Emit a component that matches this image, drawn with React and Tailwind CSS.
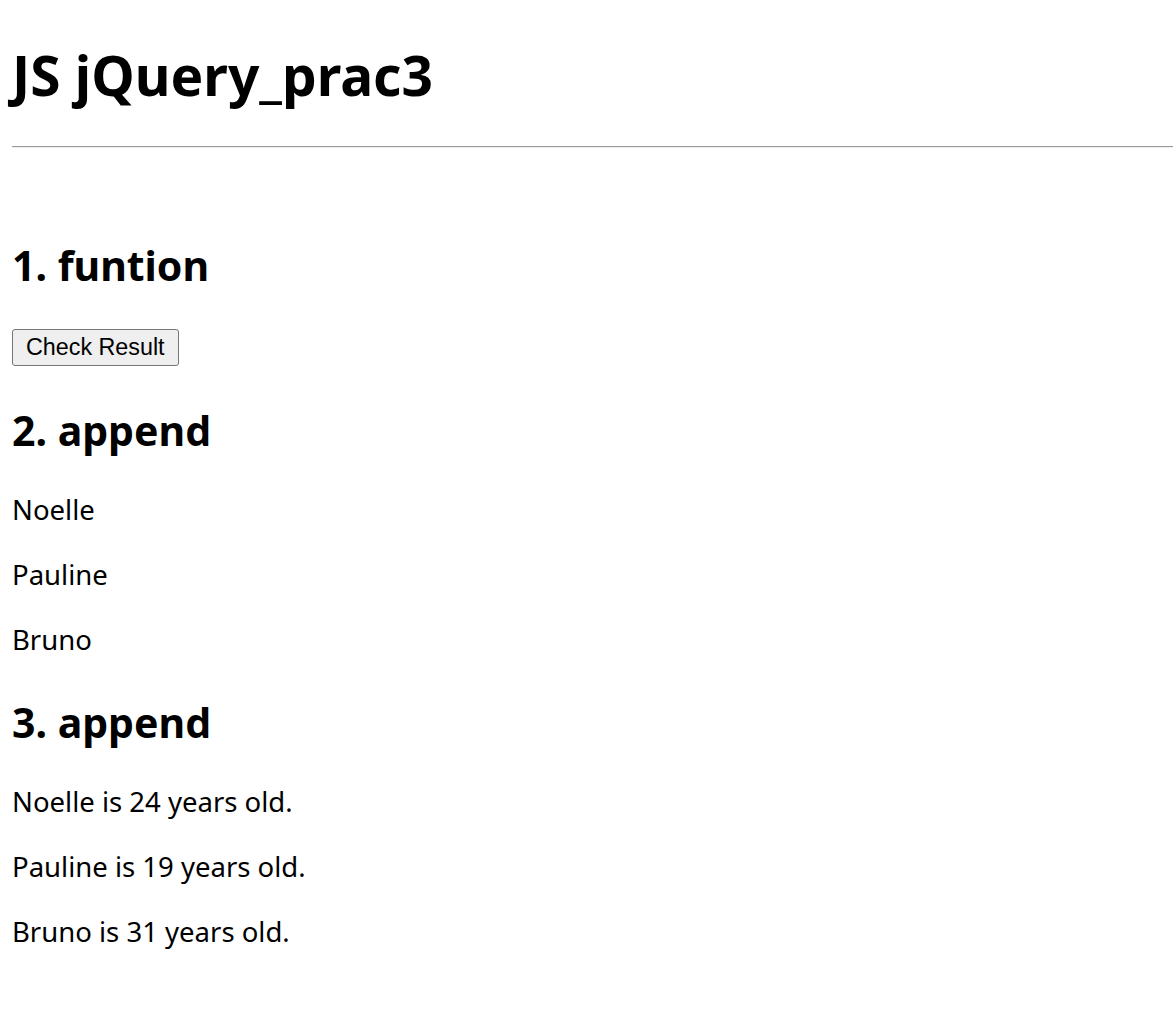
export default function App() {
  const names = ['Noelle', 'Pauline', 'Bruno'];
  const people = [
    { name: 'Noelle', age: 24 },
    { name: 'Pauline', age: 19 },
    { name: 'Bruno', age: 31 },
  ];

  return (
    <div className="min-h-[1034px] bg-white pt-[32px] text-black [font-family:'Noto_Sans','Noto_Sans_CJK_KR',sans-serif]">
      <h1 className="mx-[12px] pt-[4px] text-[55px] font-bold leading-[78px]">JS jQuery_prac3</h1>

      {/* hr (inset) */}
      <div className="ml-[12px] mt-[32px] h-[2px] border-t border-b border-t-[#9a9a9a] border-b-[#eeeeee]" />

      <h2 className="mx-[12px] mt-[84px] pt-[5px] text-[41px] font-bold leading-[56px]">1. funtion</h2>
      <div className="mx-[12px] mt-[30px] h-[44px] pt-[6px]">
        <button className="h-[37px] rounded-[3px] border border-[#767676] bg-[#efefef] px-[13px] text-[23.3px] leading-none text-black [font-family:'Liberation_Sans',Arial,sans-serif]">
          Check Result
        </button>
      </div>

      <h2 className="mx-[12px] mt-[30px] pt-[5px] text-[41px] font-bold leading-[56px]">2. append</h2>
      <div className="mt-[30px]">
        {names.map((n, i) => (
          <p key={n} className={`mx-[12px] pt-[3px] text-[27.5px] leading-[38px] ${i > 0 ? 'mt-[24px]' : ''}`}>
            {n}
          </p>
        ))}
      </div>

      <h2 className="mx-[12px] mt-[30px] pt-[5px] text-[41px] font-bold leading-[56px]">3. append</h2>
      <div className="mt-[30px]">
        {people.map((p, i) => (
          <p key={p.name} className={`mx-[12px] pt-[3px] text-[27.5px] leading-[38px] ${i > 0 ? 'mt-[24px]' : ''}`}>
            {p.name} is {p.age} years old.
          </p>
        ))}
      </div>
    </div>
  );
}
